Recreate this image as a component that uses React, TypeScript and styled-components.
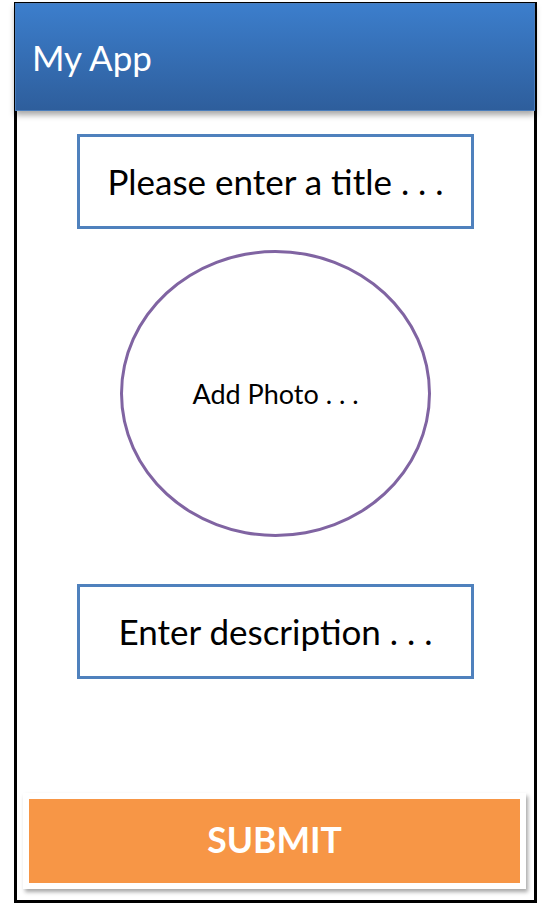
import React from 'react'
import styled, { createGlobalStyle } from 'styled-components'

const GlobalStyle = createGlobalStyle`
  html, body {
    margin: 0;
    padding: 0;
    background: #ffffff;
  }
  body {
    font-family: Lato, "Open Sans", "Liberation Sans", sans-serif;
  }
`

const Frame = styled.div`
  box-sizing: border-box;
  width: 523px;
  height: 901px;
  margin: 2px 0 0 14px;
  border: 3px solid #000000;
  display: flex;
  flex-direction: column;
  align-items: center;
`

const Header = styled.header`
  box-sizing: border-box;
  align-self: stretch;
  height: 108px;
  margin: -2px -1px 0 -2px;
  padding-left: 16px;
  display: flex;
  align-items: center;
  background-image: linear-gradient(to bottom, #3c7ecc, #2e5e9c);
  border: 1px solid #4a7dbb;
  box-shadow: 0 4px 6px rgba(0, 0, 0, 0.35);
  color: #ffffff;
  font-size: 35px;
  position: relative;
`

const HeaderTitle = styled.h1`
  margin: 0;
  font-size: inherit;
  font-weight: 400;
`

const Field = styled.div<{ $top: number }>`
  box-sizing: border-box;
  width: 397px;
  height: 95px;
  margin-top: ${(p) => p.$top}px;
  border: 3px solid #4f81bd;
  display: flex;
  align-items: center;
  justify-content: center;
  color: #000000;
  font-size: 35px;
  padding-bottom: 2px;
`

const PhotoOval = styled.div`
  box-sizing: border-box;
  width: 311px;
  height: 287px;
  margin-top: 21px;
  border: 3px solid #8064a2;
  border-radius: 50%;
  display: flex;
  align-items: center;
  justify-content: center;
  font-size: 27px;
  color: #000000;
`

const SubmitCard = styled.div`
  box-sizing: border-box;
  width: 503px;
  margin-top: auto;
  margin-bottom: 11px;
  margin-right: 2px;
  padding: 6px;
  background: #ffffff;
  box-shadow: 2px 3px 4px rgba(0, 0, 0, 0.35);
`

const SubmitButton = styled.button`
  display: flex;
  align-items: center;
  justify-content: center;
  width: 100%;
  height: 84px;
  border: none;
  background: #f79646;
  color: #ffffff;
  font-family: inherit;
  font-size: 35.5px;
  font-weight: 700;
  padding: 0 0 4px;
`

export default function App() {
  return (
    <>
      <GlobalStyle />
      <Frame>
        <Header>
          <HeaderTitle>My App</HeaderTitle>
        </Header>
        <Field $top={23}>Please enter a title . . .</Field>
        <PhotoOval>Add Photo . . .</PhotoOval>
        <Field $top={47}>Enter description . . .</Field>
        <SubmitCard>
          <SubmitButton>SUBMIT</SubmitButton>
        </SubmitCard>
      </Frame>
    </>
  )
}
